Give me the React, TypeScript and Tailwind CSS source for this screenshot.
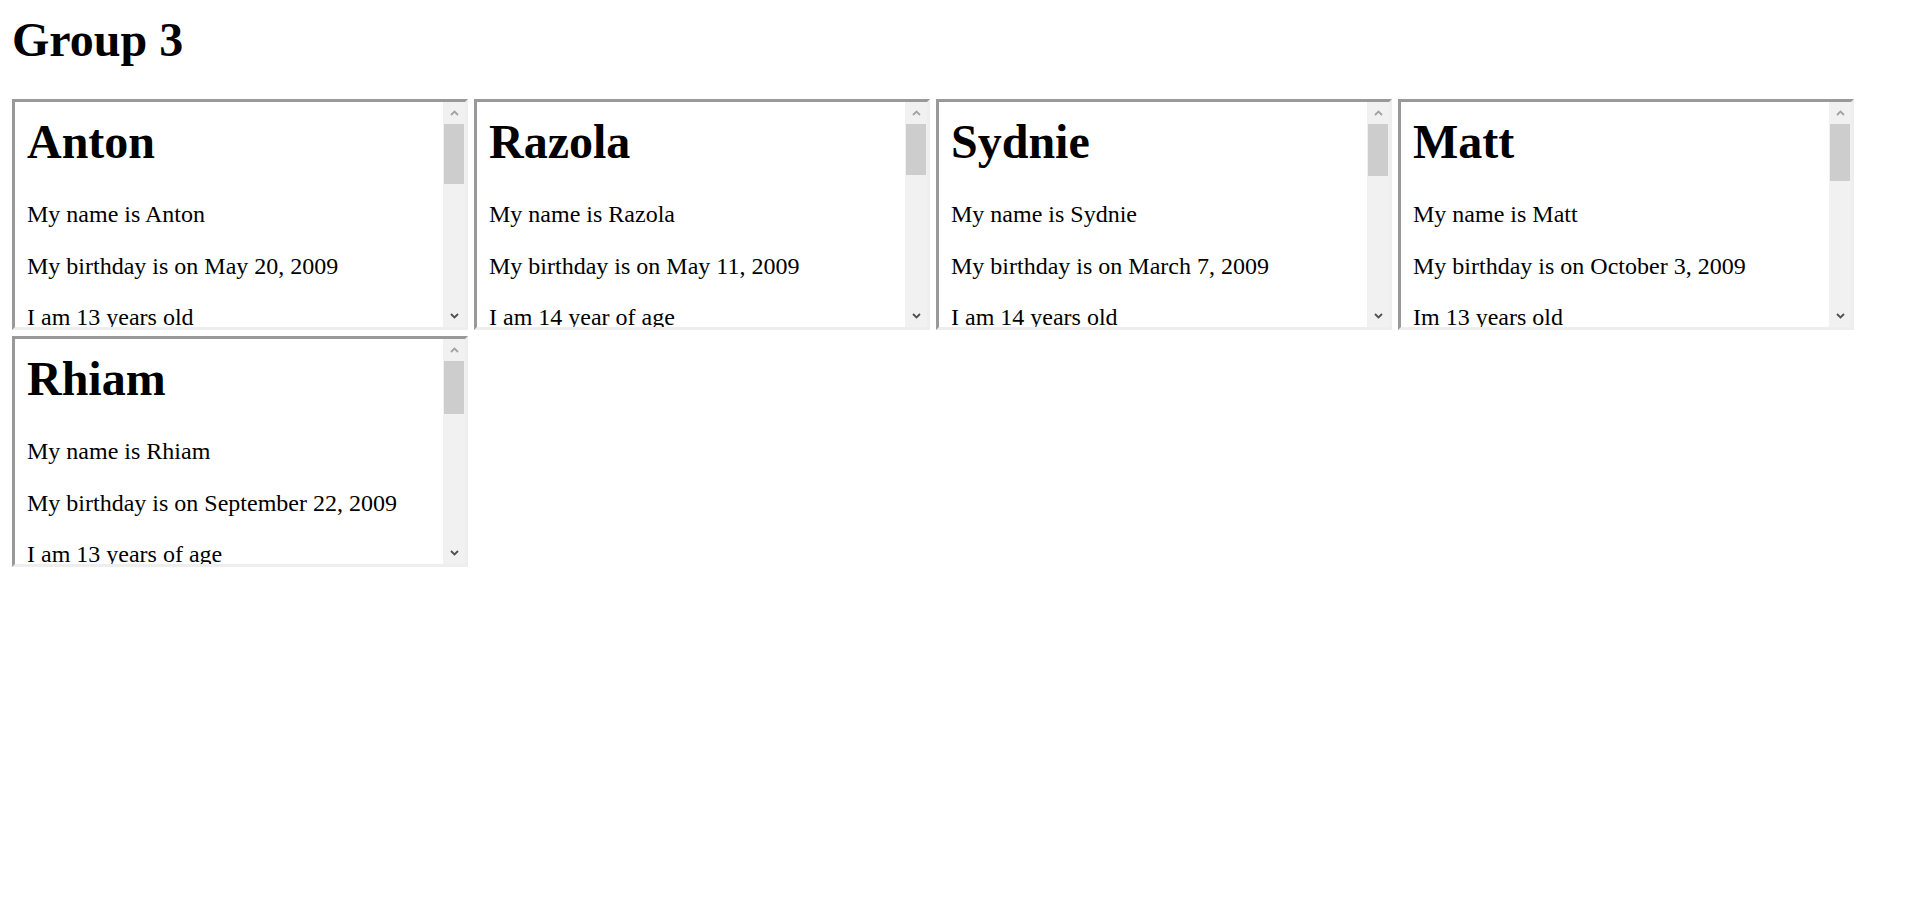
import React from 'react'

interface Member {
  name: string
  birthday: string
  age: string
  thumb: number
}

const members: Member[] = [
  { name: 'Anton', birthday: 'May 20, 2009', age: 'I am 13 years old', thumb: 60 },
  { name: 'Razola', birthday: 'May 11, 2009', age: 'I am 14 year of age', thumb: 51 },
  { name: 'Sydnie', birthday: 'March 7, 2009', age: 'I am 14 years old', thumb: 52 },
  { name: 'Matt', birthday: 'October 3, 2009', age: 'Im 13 years old', thumb: 57 },
  { name: 'Rhiam', birthday: 'September 22, 2009', age: 'I am 13 years of age', thumb: 53 },
]

const Chevron = ({ up, color }: { up?: boolean; color: string }) => (
  <svg width="9" height="6" viewBox="0 0 9 6">
    <polyline
      points={up ? '1,5 4.5,1.5 8,5' : '1,1 4.5,4.5 8,1'}
      fill="none"
      stroke={color}
      strokeWidth="1.8"
    />
  </svg>
)

const FakeScrollbar = ({ thumb }: { thumb: number }) => (
  <div className="w-[22px] h-full bg-[#f1f1f1] flex flex-col">
    <div className="h-[22px] flex items-center justify-center">
      <Chevron up color="#a3a3a3" />
    </div>
    <div className="flex-1">
      <div className="bg-[#cdcdcd] mx-[1px]" style={{ height: thumb }} />
    </div>
    <div className="h-[22px] flex items-center justify-center">
      <Chevron color="#505050" />
    </div>
  </div>
)

const MemberFrame = ({ member }: { member: Member }) => {
  return (
    <div className="w-[456px] h-[231px] border-[3px] border-t-[#999999] border-l-[#999999] border-b-[#eeeeee] border-r-[#eeeeee] bg-white flex">
      <div className="flex-1 overflow-hidden px-3 pt-3">
        <h1 className="text-[48px] font-bold leading-[55px] mb-[32px]">{member.name}</h1>
        <p className="text-[24px] leading-[27.6px] mb-[24px]">My name is {member.name}</p>
        <p className="text-[24px] leading-[27.6px] mb-[24px]">My birthday is on {member.birthday}</p>
        <p className="text-[24px] leading-[27.6px] mb-[24px]">{member.age}</p>
        <p className="text-[24px] leading-[27.6px] mb-[24px]">&nbsp;</p>
      </div>
      <FakeScrollbar thumb={member.thumb} />
    </div>
  )
}

const App = () => {
  return (
    <div className="min-h-screen bg-white text-black p-3 font-['Liberation_Serif','Times_New_Roman',serif]">
      <h1 className="text-[48px] font-bold leading-[55px] mb-[32px]">Group 3</h1>
      <div className="flex flex-wrap gap-[6px]">
        {members.map((m) => (
          <MemberFrame key={m.name} member={m} />
        ))}
      </div>
    </div>
  )
}

export default App
